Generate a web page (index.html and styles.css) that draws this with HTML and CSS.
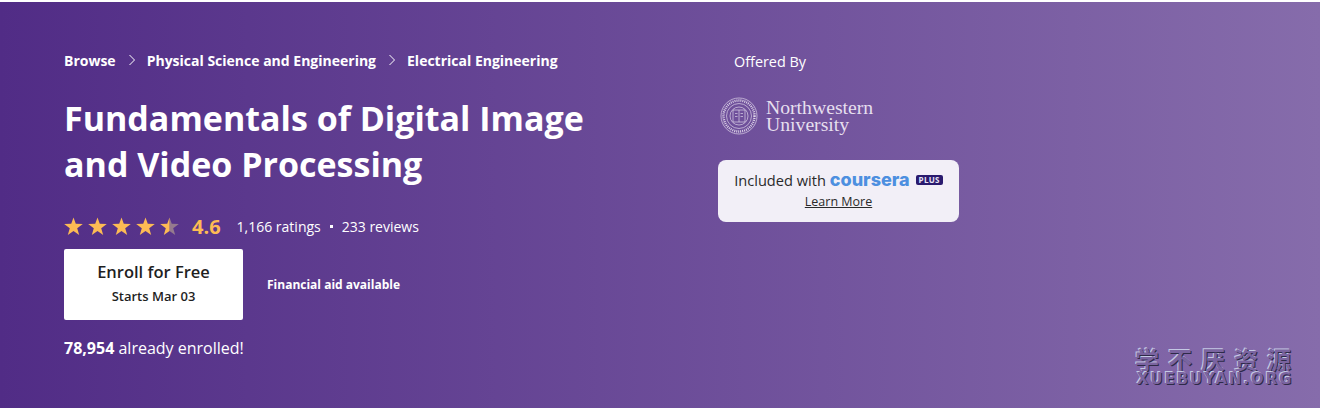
FILE: index.html
```html
<!DOCTYPE html>
<html lang="en">
<head>
    <meta charset="UTF-8">
    <meta name="viewport" content="width=device-width, initial-scale=1.0">
    <title>Fundamentals of Digital Image and Video Processing</title>
    <link rel="stylesheet" href="styles.css">
</head>
<body>

    <div class="hero">
        <div class="hero-main">
            <nav class="crumbs">
                <a>Browse</a>
                <svg class="crumb-sep" viewBox="0 0 8 12"><path d="M1.5 1 L6.5 6 L1.5 11"/></svg>
                <a>Physical Science and Engineering</a>
                <svg class="crumb-sep" viewBox="0 0 8 12"><path d="M1.5 1 L6.5 6 L1.5 11"/></svg>
                <a>Electrical Engineering</a>
            </nav>

            <h1>Fundamentals of Digital Image<br>and Video Processing</h1>

            <div class="rating-row">
                <div class="stars">
                    <svg class="star" viewBox="0 0 20 20"><path d="M10 0.5 L12.4 7.2 L19.8 7.4 L13.9 11.8 L16 18.9 L10 14.7 L4 18.9 L6.1 11.8 L0.2 7.4 L7.6 7.2 Z"/></svg>
                    <svg class="star" viewBox="0 0 20 20"><path d="M10 0.5 L12.4 7.2 L19.8 7.4 L13.9 11.8 L16 18.9 L10 14.7 L4 18.9 L6.1 11.8 L0.2 7.4 L7.6 7.2 Z"/></svg>
                    <svg class="star" viewBox="0 0 20 20"><path d="M10 0.5 L12.4 7.2 L19.8 7.4 L13.9 11.8 L16 18.9 L10 14.7 L4 18.9 L6.1 11.8 L0.2 7.4 L7.6 7.2 Z"/></svg>
                    <svg class="star" viewBox="0 0 20 20"><path d="M10 0.5 L12.4 7.2 L19.8 7.4 L13.9 11.8 L16 18.9 L10 14.7 L4 18.9 L6.1 11.8 L0.2 7.4 L7.6 7.2 Z"/></svg>
                    <svg class="star" viewBox="0 0 20 20">
                        <path class="star-empty" d="M10 0.5 L12.4 7.2 L19.8 7.4 L13.9 11.8 L16 18.9 L10 14.7 Z"/>
                        <path d="M10 0.5 L10 14.7 L4 18.9 L6.1 11.8 L0.2 7.4 L7.6 7.2 Z"/>
                    </svg>
                </div>
                <span class="score">4.6</span>
                <span class="counts">1,166 ratings</span>
                <span class="dot"></span>
                <span class="counts">233 reviews</span>
            </div>

            <div class="enroll-row">
                <button class="enroll-btn">
                    <span class="enroll-title">Enroll for Free</span>
                    <span class="enroll-sub">Starts Mar 03</span>
                </button>
                <span class="aid">Financial aid available</span>
            </div>

            <p class="enrolled"><strong>78,954</strong> already enrolled!</p>
        </div>

        <aside class="hero-side">
            <p class="offered">Offered By</p>

            <div class="partner">
                <svg class="seal" viewBox="0 0 38 38">
                    <circle cx="19" cy="19" r="18" class="seal-line"/>
                    <circle cx="19" cy="19" r="15.5" class="seal-dash"/>
                    <circle cx="19" cy="19" r="12.5" class="seal-line"/>
                    <circle cx="19" cy="19" r="9" class="seal-line"/>
                    <path class="seal-line" d="M13 13 H25 V25 H13 Z M19 13 V25 M15 16.5 H17.5 M15 19.5 H17.5 M20.5 16.5 H23 M20.5 19.5 H23"/>
                </svg>
                <div class="partner-name">Northwestern<br>University</div>
            </div>

            <div class="plus-card">
                <div class="plus-line">
                    <span>Included with</span>
                    <span class="cs-logo">coursera</span>
                    <span class="plus-tag">PLUS</span>
                </div>
                <a class="learn-more">Learn More</a>
            </div>
        </aside>

        <div class="watermark">
            <div class="wm-cn">学不厌资源</div>
            <div class="wm-en">XUEBUYAN.ORG</div>
        </div>
    </div>

</body>
</html>
```

FILE: styles.css
```css
body {
    margin: 0;
    padding: 0;
    background-color: #fff;
    font-family: "Open Sans", Arial, sans-serif;
    overflow: hidden;
}

.hero {
    position: relative;
    display: flex;
    height: 406px;
    margin-top: 2px;
    padding-left: 64px;
    background: linear-gradient(90deg, #512c86 0%, #866cab 100%);
    color: #fff;
}

.hero-main {
    width: 654px;
    padding-top: 49px;
}

.crumbs {
    display: flex;
    align-items: center;
    height: 18px;
    font-size: 14px;
    font-weight: 700;
}

.crumb-sep {
    width: 8px;
    height: 12px;
    margin: 0 11px 0 12px;
    fill: none;
    stroke: #fff;
    stroke-width: 1;
}

h1 {
    margin: 26px 0 0 0;
    font-size: 34px;
    line-height: 46px;
    font-weight: 700;
}

.rating-row {
    display: flex;
    align-items: center;
    height: 24px;
    margin-top: 27px;
}

.stars {
    display: flex;
    gap: 5px;
}

.star {
    width: 19px;
    height: 19px;
    fill: #fdbb54;
}

.star-empty {
    fill: #957a8e;
}

.score {
    margin-left: 13px;
    margin-right: 16px;
    font-size: 20px;
    font-weight: 700;
    color: #fdbb54;
}

.counts {
    font-size: 14px;
}

.dot {
    width: 3px;
    height: 3px;
    margin: 0 9px;
    background-color: #fff;
}

.enroll-row {
    display: flex;
    align-items: center;
    margin-top: 11px;
}

.enroll-btn {
    display: flex;
    flex-direction: column;
    align-items: center;
    justify-content: center;
    width: 179px;
    height: 71px;
    padding: 0 0 4px 0;
    border: none;
    border-radius: 2px;
    background-color: #fff;
    color: #1f1f1f;
    font-family: inherit;
    cursor: pointer;
}

.enroll-title {
    font-size: 16.5px;
    line-height: 22px;
    font-weight: 600;
}

.enroll-sub {
    margin-top: 4px;
    font-size: 13px;
    line-height: 18px;
    font-weight: 600;
}

.aid {
    margin-left: 24px;
    font-size: 12px;
    font-weight: 700;
}

.enrolled {
    margin: 17px 0 0 0;
    font-size: 16px;
    line-height: 22px;
}

.hero-side {
    width: 241px;
    padding-top: 50px;
}

.offered {
    margin: 0 0 0 16px;
    font-size: 14.4px;
    line-height: 19px;
}

.partner {
    display: flex;
    align-items: center;
    margin-top: 26px;
    margin-left: 2px;
}

.seal {
    width: 38px;
    height: 38px;
}

.seal-line {
    fill: none;
    stroke: #ddd3e8;
    stroke-width: 0.7;
}

.seal-dash {
    fill: none;
    stroke: #ddd3e8;
    stroke-width: 2.4;
    stroke-dasharray: 1 1;
}

.partner-name {
    margin-left: 8px;
    font-family: "Liberation Serif", serif;
    font-size: 19.7px;
    line-height: 17px;
    color: #e6dfee;
}

.plus-card {
    display: flex;
    flex-direction: column;
    align-items: center;
    height: 62px;
    margin-top: 25px;
    border-radius: 8px;
    background-color: #f2eff7;
    color: #2a2a2a;
}

.plus-line {
    display: flex;
    align-items: center;
    height: 20px;
    margin-top: 10px;
    font-size: 14.6px;
}

.cs-logo {
    margin-left: 4px;
    font-family: Inter, sans-serif;
    font-size: 18px;
    line-height: 20px;
    font-weight: 800;
    color: #4d8fe0;
}

.plus-tag {
    margin-left: 6px;
    padding: 0 3px;
    border-radius: 2px;
    background-color: #2a1a6e;
    color: #e8e4f4;
    font-size: 8px;
    line-height: 10px;
    font-weight: 700;
    letter-spacing: 0.3px;
}

.learn-more {
    margin-top: 4px;
    font-size: 12.5px;
    line-height: 16px;
    text-decoration: underline;
}

/* watermark over the banner */
.watermark {
    position: absolute;
    right: 25px;
    top: 343px;
    width: 160px;
    color: #7a64a0;
    text-align: center;
    text-shadow: 1px 1px 0 #2e2a48, -1px -1px 0 #c4c8e4;
}

.wm-cn {
    font-family: "Noto Sans CJK SC", sans-serif;
    font-size: 24px;
    line-height: 27px;
    font-weight: 700;
    letter-spacing: 9px;
    white-space: nowrap;
}

.wm-en {
    font-family: "DejaVu Sans", sans-serif;
    font-size: 15px;
    line-height: 14px;
    font-weight: 700;
    letter-spacing: 1.9px;
    white-space: nowrap;
}
```
